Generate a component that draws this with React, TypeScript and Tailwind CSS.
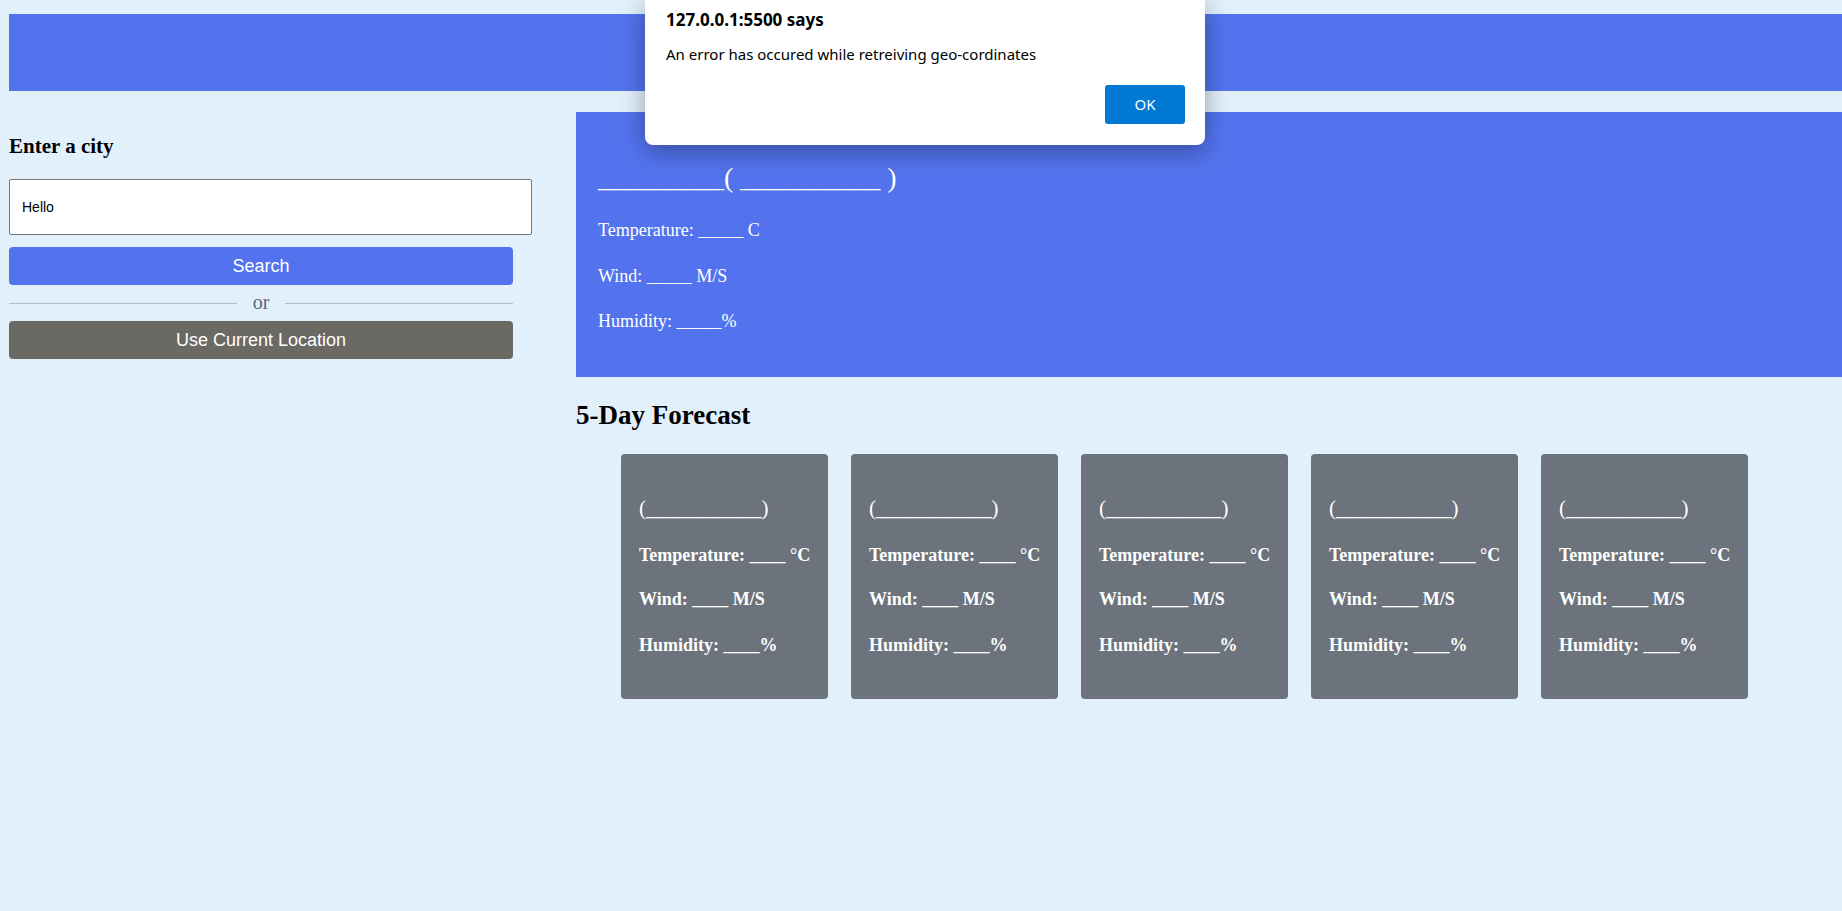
const days = [1, 2, 3, 4, 5];

const ForecastCard = () => {
  return (
    <div className="w-[207px] h-[245px] bg-[#6c737c] rounded-[4px] px-[18px] pt-[38px] text-white font-bold whitespace-nowrap">
      <p className="text-[21px] leading-[32px] font-normal">(___________)</p>
      <p className="text-[18px] leading-[20px] mt-[21px]">Temperature: ____ °C</p>
      <p className="text-[18px] leading-[20px] mt-[24px]">Wind: ____ M/S</p>
      <p className="text-[18px] leading-[20px] mt-[26px]">Humidity: ____%</p>
    </div>
  );
};

export default function App() {
  return (
    <div className="relative min-h-[911px] bg-[#e2f0fc] font-['Liberation_Serif','Times_New_Roman',serif] overflow-hidden">
      {/* header */}
      <div className="ml-[9px] mt-[14px] h-[77px] bg-[#5373ee]" />

      <div className="flex mt-[21px]">
        {/* search sidebar */}
        <div className="w-[523px] ml-[9px] pt-[23px] shrink-0">
          <h3 className="text-[21px] leading-[22px] font-bold text-black">Enter a city</h3>
          <input
            readOnly
            value="Hello"
            className="mt-[22px] w-[523px] h-[56px] bg-white border border-[#767676] rounded-[2px] px-[12px] text-[14px] font-['Liberation_Sans',Arial,sans-serif] text-black outline-none"
          />
          <button className="mt-[12px] w-[504px] h-[38px] rounded-[4px] bg-[#5373ee] text-white text-[18px] font-['Liberation_Sans',Arial,sans-serif]">
            Search
          </button>
          <div className="w-[504px] flex items-center gap-[16px] h-[36px]">
            <div className="flex-1 h-px bg-[#b4bcc6]" />
            <span className="text-[20px] leading-none text-[#5f6770] -mt-[2px]">or</span>
            <div className="flex-1 h-px bg-[#b4bcc6]" />
          </div>
          <button className="w-[504px] h-[38px] rounded-[4px] bg-[#6b6964] text-white text-[18px] font-['Liberation_Sans',Arial,sans-serif]">
            Use Current Location
          </button>
        </div>

        {/* weather */}
        <div className="ml-[44px] flex-1">
          <div className="h-[265px] bg-[#5373ee] pl-[22px] pt-[48px] text-white">
            <h2 className="text-[28px] leading-[36px]">_________( __________ )</h2>
            <p className="text-[18px] leading-[20px] mt-[24px]">Temperature: _____ C</p>
            <p className="text-[18px] leading-[20px] mt-[26px]">Wind: _____ M/S</p>
            <p className="text-[18px] leading-[20px] mt-[25px]">Humidity: _____%</p>
          </div>
          <h2 className="mt-[24px] text-[27px] leading-[28px] font-bold text-black">5-Day Forecast</h2>
          <div className="flex gap-[23px] ml-[45px] mt-[25px]">
            {days.map((d) => (
              <ForecastCard key={d} />
            ))}
          </div>
        </div>
      </div>

      {/* browser alert */}
      <div className="absolute left-[645px] top-0 w-[560px] h-[145px] bg-white rounded-b-[8px] shadow-[0_6px_24px_rgba(0,0,0,0.35)] font-['Noto_Sans','Open_Sans',sans-serif] text-black">
        <p className="absolute left-[21px] top-[7px] text-[17px] font-bold">127.0.0.1:5500 says</p>
        <p className="absolute left-[21px] top-[43px] text-[15px]">An error has occured while retreiving geo-cordinates</p>
        <button className="absolute right-[20px] top-[85px] w-[80px] h-[39px] bg-[#0078d4] rounded-[3px] text-white text-[15px]">
          OK
        </button>
      </div>
    </div>
  );
}
